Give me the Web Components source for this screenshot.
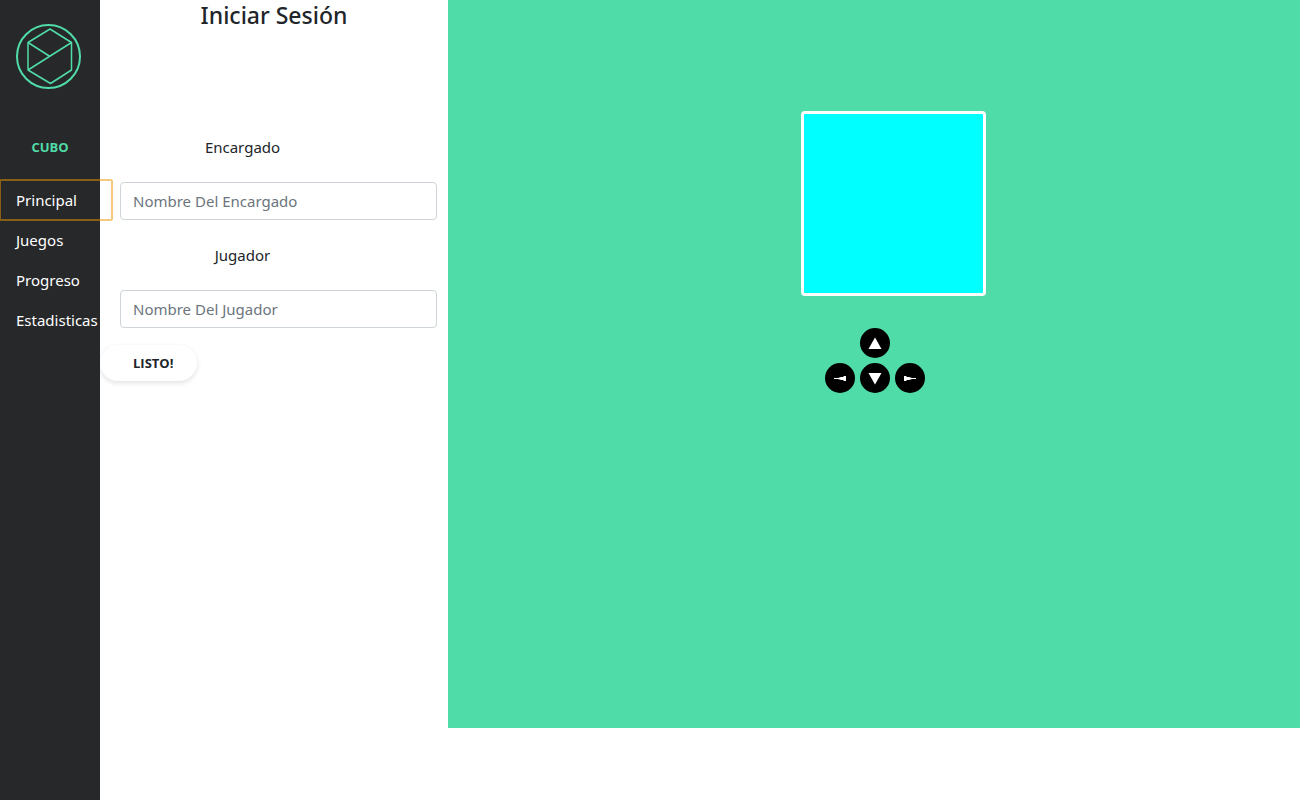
<!DOCTYPE html>
<html lang="es">
<head>
<meta charset="utf-8">
<meta name="viewport" content="width=device-width, initial-scale=1">
<title>Cubo</title>
<style>
  body { margin: 0; font: 15px/24px "Noto Sans", "Open Sans", sans-serif; color: #212529; background: #fff; }
</style>
</head>
<body>
<cubo-app>
  <cubo-sidebar slot="side">
    <cubo-link href="#principal" current>Principal</cubo-link>
    <cubo-link href="#juegos">Juegos</cubo-link>
    <cubo-link href="#progreso">Progreso</cubo-link>
    <cubo-link href="#estadisticas">Estadisticas</cubo-link>
  </cubo-sidebar>
  <cubo-login heading="Iniciar Sesión">
    <cubo-field label="Encargado" placeholder="Nombre Del Encargado"></cubo-field>
    <cubo-field label="Jugador" placeholder="Nombre Del Jugador"></cubo-field>
  </cubo-login>
  <cubo-stage slot="stage"></cubo-stage>
</cubo-app>
<script>
const define = (name, html, setup) => {
  const template = document.createElement('template');
  template.innerHTML = html;
  customElements.define(name, class extends HTMLElement {
    constructor() {
      super();
      this.attachShadow({ mode: 'open' }).append(template.content.cloneNode(true));
    }
    connectedCallback() { if (setup) setup(this, this.shadowRoot); }
  });
};

define('cubo-app', `
  <style>
    :host { display: grid; grid-template-columns: 100px 1fr; min-height: 100vh; }
    .content { display: grid; grid-template-columns: 29% 71%; align-items: start; }
  </style>
  <slot name="side"></slot>
  <main class="content"><slot></slot><slot name="stage"></slot></main>
`);

define('cubo-sidebar', `
  <style>
    :host { display: block; box-sizing: border-box; padding-top: 24px; background: #27282a; z-index: 1; }
    svg { display: block; width: 65px; height: 65px; margin-left: 16px; }
    h2 { margin: 46px 0 21px; font: 700 13px/24px "Open Sans", "Noto Sans", sans-serif; text-align: center; color: #50dca8; }
    nav { display: flex; flex-direction: column; width: 112px; }
  </style>
  <svg viewBox="0 0 65 65" fill="none" stroke="#50dca8" aria-hidden="true">
    <circle cx="32.5" cy="32.5" r="31.5" stroke-width="2"/>
    <path d="M34 5 L55.500 18.500 V46 L34.500 59.500 L12 46 V18.500 Z M12 18.500 L34 32.500 M12 46 L55.500 18.500" stroke-width="1.500" stroke-linejoin="round"/>
  </svg>
  <h2>CUBO</h2>
  <nav><slot></slot></nav>
`);

define('cubo-link', `
  <style>
    :host { display: block; }
    a { display: block; padding: 8px 16px; color: #fff; text-decoration: none; line-height: 24px; }
    :host([current]) a { outline: 2px solid rgba(235, 148, 0, .5); outline-offset: -1px; border-radius: 1px; }
  </style>
  <a><slot></slot></a>
`, (host, root) => {
  const a = root.querySelector('a');
  a.href = host.getAttribute('href');
  if (host.hasAttribute('current')) a.setAttribute('aria-current', 'page');
});

define('cubo-login', `
  <style>
    :host { display: block; }
    h1 { margin: 0 0 104px; font-size: 23px; line-height: 31px; font-weight: 500; text-align: center; }
    form { display: flex; flex-direction: column; align-items: stretch; gap: 23px; }
    button {
      align-self: flex-start; height: 36px; margin-top: -6px; padding: 0 24px 0 33px; border: 0; border-radius: 18px; background: #fff;
      font: 700 13px/36px "Open Sans", "Noto Sans", sans-serif; color: #212529;
      box-shadow: 0 2px 5px rgba(0, 0, 0, .12);
    }
  </style>
  <h1></h1>
  <form><slot></slot><button type="button">LISTO!</button></form>
`, (host, root) => { root.querySelector('h1').textContent = host.getAttribute('heading'); });

define('cubo-field', `
  <style>
    :host { display: block; }
    label { display: block; margin: 0 63px 23px 0; text-align: center; line-height: 24px; }
    input {
      display: block; box-sizing: border-box; width: calc(100% - 31px); height: 38px; margin: 0 11px 0 20px;
      padding: 6px 12px; border: 1px solid #ced4da; border-radius: 4px; background: #fff;
      font: inherit; color: #495057;
    }
    input::placeholder { color: #6c757d; opacity: 1; }
  </style>
  <label for="name"></label>
  <input id="name" type="text">
`, (host, root) => {
  root.querySelector('label').textContent = host.getAttribute('label');
  root.querySelector('input').placeholder = host.getAttribute('placeholder');
});

define('cubo-stage', `
  <style>
    :host { display: flex; flex-direction: column; align-items: center; box-sizing: border-box; min-height: 91vh; padding-top: 111px; background: #50dca8; }
    .cube { box-sizing: border-box; width: 185px; height: 185px; margin: 0 0 32px 39px; border: 3px solid #fff; border-radius: 4px; background: #0ff; }
    .pad { display: grid; grid-template-columns: repeat(3, 30px); gap: 5px; margin-left: 2px; }
    button { display: block; width: 30px; height: 30px; padding: 0; border: 0; border-radius: 50%; background: #000; }
    button:first-child { grid-column: 2; }
    button:nth-child(2) { grid-column: 1; }
    svg { display: block; width: 30px; height: 30px; fill: #fff; }
  </style>
  <div class="cube"></div>
  <div class="pad">
    <button type="button" aria-label="Arriba"><svg viewBox="0 0 30 30"><path d="M15 9.500 L21.500 21 H8.500 Z"/></svg></button>
    <button type="button" aria-label="Izquierda"><svg viewBox="0 0 30 30"><path d="M9 15 H13 L16 14 H18.500 V13 H21 V18 H18.500 V17 H16 L13 16 H9 Z"/></svg></button>
    <button type="button" aria-label="Abajo"><svg viewBox="0 0 30 30"><path d="M15 21.500 L8.500 10 H21.500 Z"/></svg></button>
    <button type="button" aria-label="Derecha"><svg viewBox="0 0 30 30"><path d="M21 15 H17 L14 14 H11.500 V13 H9 V18 H11.500 V17 H14 L17 16 H21 Z"/></svg></button>
  </div>
`);
</script>
</body>
</html>
